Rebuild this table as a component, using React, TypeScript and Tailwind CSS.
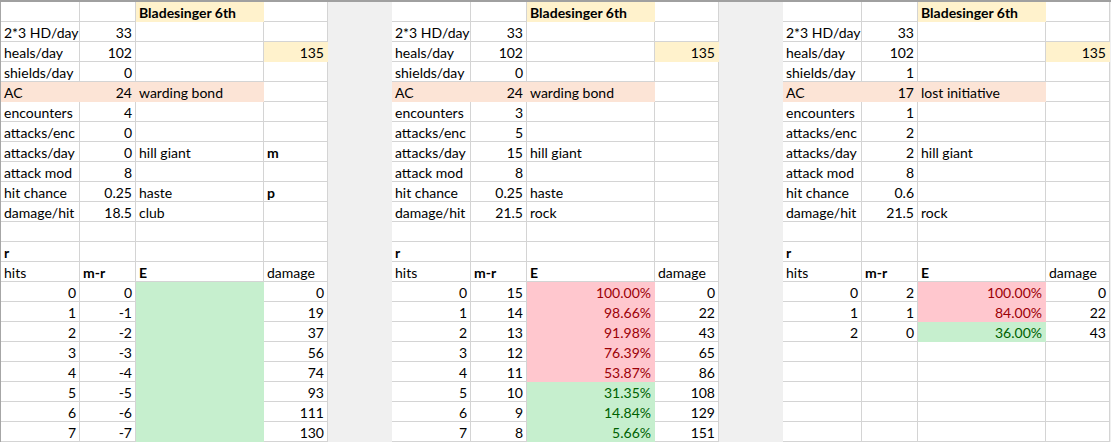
type Fill = 'none' | 'yellow' | 'peach' | 'red' | 'green';

interface CellProps {
  text?: string | number;
  right?: boolean;
  bold?: boolean;
  fill?: Fill;
}

// fill colours hide the grid line, like in the sheet
const FILL_CLASSES: Record<Fill, string> = {
  none: 'bg-white border-[#d4d4d4] text-black',
  yellow: 'bg-[#fff2cc] border-[#fff2cc] text-black',
  peach: 'bg-[#fce4d6] border-[#fce4d6] text-black',
  red: 'bg-[#ffc7ce] border-[#ffc7ce] text-[#9c0006]',
  green: 'bg-[#c6efce] border-[#c6efce] text-[#006100]',
};

function Cell({ text = '', right = false, bold = false, fill = 'none' }: CellProps) {
  return (
    <div
      className={`h-[20px] overflow-hidden whitespace-nowrap border-r border-b px-[3px] leading-[21px] ${
        FILL_CLASSES[fill]
      } ${right ? 'text-right' : 'text-left'} ${bold ? 'font-bold' : ''}`}
    >
      {text}
    </div>
  );
}

interface PanelData {
  shields: number;
  ac: number;
  acNote: string;
  encounters: number;
  attacksEnc: number;
  attacksDay: number;
  hitChance: string;
  hitNote: string;
  damageHit: string;
  weapon: string;
  letters: boolean;
  rows: { hits: number; mr: number; e?: string; fill?: Fill; damage: number }[];
}

const PANELS: PanelData[] = [
  {
    shields: 0,
    ac: 24,
    acNote: 'warding bond',
    encounters: 4,
    attacksEnc: 0,
    attacksDay: 0,
    hitChance: '0.25',
    hitNote: 'haste',
    damageHit: '18.5',
    weapon: 'club',
    letters: true,
    rows: [0, 19, 37, 56, 74, 93, 111, 130].map((damage, i) => ({
      hits: i,
      mr: -i,
      fill: 'green' as Fill,
      damage,
    })),
  },
  {
    shields: 0,
    ac: 24,
    acNote: 'warding bond',
    encounters: 3,
    attacksEnc: 5,
    attacksDay: 15,
    hitChance: '0.25',
    hitNote: 'haste',
    damageHit: '21.5',
    weapon: 'rock',
    letters: false,
    rows: [
      { hits: 0, mr: 15, e: '100.00%', fill: 'red', damage: 0 },
      { hits: 1, mr: 14, e: '98.66%', fill: 'red', damage: 22 },
      { hits: 2, mr: 13, e: '91.98%', fill: 'red', damage: 43 },
      { hits: 3, mr: 12, e: '76.39%', fill: 'red', damage: 65 },
      { hits: 4, mr: 11, e: '53.87%', fill: 'red', damage: 86 },
      { hits: 5, mr: 10, e: '31.35%', fill: 'green', damage: 108 },
      { hits: 6, mr: 9, e: '14.84%', fill: 'green', damage: 129 },
      { hits: 7, mr: 8, e: '5.66%', fill: 'green', damage: 151 },
    ],
  },
  {
    shields: 1,
    ac: 17,
    acNote: 'lost initiative',
    encounters: 1,
    attacksEnc: 2,
    attacksDay: 2,
    hitChance: '0.6',
    hitNote: '',
    damageHit: '21.5',
    weapon: 'rock',
    letters: false,
    rows: [
      { hits: 0, mr: 2, e: '100.00%', fill: 'red', damage: 0 },
      { hits: 1, mr: 1, e: '84.00%', fill: 'red', damage: 22 },
      { hits: 2, mr: 0, e: '36.00%', fill: 'green', damage: 43 },
    ],
  },
];

function Panel({ p }: { p: PanelData }) {
  const empty = 8 - p.rows.length;
  return (
    <div className="grid grid-cols-[79px_56px_128px_64px]">
      <Cell />
      <Cell />
      <Cell text="Bladesinger 6th" bold fill="yellow" />
      <Cell />

      <Cell text="2*3 HD/day" />
      <Cell text={33} right />
      <Cell />
      <Cell />

      <Cell text="heals/day" />
      <Cell text={102} right />
      <Cell />
      <Cell text={135} right fill="yellow" />

      <Cell text="shields/day" />
      <Cell text={p.shields} right />
      <Cell />
      <Cell />

      <Cell text="AC" fill="peach" />
      <Cell text={p.ac} right fill="peach" />
      <Cell text={p.acNote} fill="peach" />
      <Cell />

      <Cell text="encounters" />
      <Cell text={p.encounters} right />
      <Cell />
      <Cell />

      <Cell text="attacks/enc" />
      <Cell text={p.attacksEnc} right />
      <Cell />
      <Cell />

      <Cell text="attacks/day" />
      <Cell text={p.attacksDay} right />
      <Cell text="hill giant" />
      <Cell text={p.letters ? 'm' : ''} bold />

      <Cell text="attack mod" />
      <Cell text={8} right />
      <Cell />
      <Cell />

      <Cell text="hit chance" />
      <Cell text={p.hitChance} right />
      <Cell text={p.hitNote} />
      <Cell text={p.letters ? 'p' : ''} bold />

      <Cell text="damage/hit" />
      <Cell text={p.damageHit} right />
      <Cell text={p.weapon} />
      <Cell />

      <Cell />
      <Cell />
      <Cell />
      <Cell />

      <Cell text="r" bold />
      <Cell />
      <Cell />
      <Cell />

      <Cell text="hits" />
      <Cell text="m-r" bold />
      <Cell text="E" bold />
      <Cell text="damage" />

      {p.rows.map((r) => (
        <div key={r.hits} className="contents">
          <Cell text={r.hits} right />
          <Cell text={r.mr} right />
          <Cell text={r.e ?? ''} right fill={r.fill} />
          <Cell text={r.damage} right />
        </div>
      ))}
      {Array.from({ length: empty }).map((_, i) => (
        <div key={`e${i}`} className="contents">
          <Cell />
          <Cell />
          <Cell />
          <Cell />
        </div>
      ))}
    </div>
  );
}

export default function App() {
  return (
    <div className="h-[442px] w-[1111px] overflow-hidden bg-[#f0f0f0] font-['Lato',sans-serif] text-[14px]">
      <div className="flex border-t-2 border-[#a0a0a0]">
        <div className="flex border-l border-[#a6a6a6]">
          <Panel p={PANELS[0]} />
          <div className="w-[64px] bg-[#f0f0f0]" />
          <Panel p={PANELS[1]} />
          <div className="w-[64px] bg-[#f0f0f0]" />
          <Panel p={PANELS[2]} />
        </div>
      </div>
    </div>
  );
}
